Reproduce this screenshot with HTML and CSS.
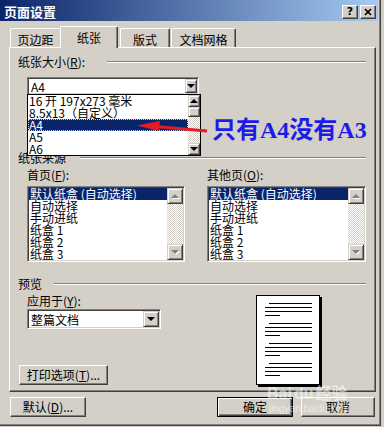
FILE: index.html
```html
<!DOCTYPE html>
<html>

<head>
    <meta charset="utf-8">
    <meta name="viewport" content="width=device-width,initial-scale=1.0">
    <title>页面设置</title>
    <link rel="stylesheet" href="styles.css">
</head>

<body>

    <div class="window">
        <div class="titlebar">
            <span class="title">页面设置</span>
            <div class="caps">
                <span class="cap">?</span>
                <span class="cap">
                    <svg width="8" height="8" viewBox="0 0 8 8"><path d="M1 1L7 7M7 1L1 7" stroke="#000" stroke-width="1.7"/></svg>
                </span>
            </div>
        </div>

        <div class="tabs">
            <div class="tab t1">页边距</div>
            <div class="tab t2 active">纸张</div>
            <div class="tab t3">版式</div>
            <div class="tab t4">文档网格</div>
        </div>

        <div class="panel">
            <div class="group-head">
                <span class="label size-label">纸张大小(<u>R</u>):</span>
                <i class="rule"></i>
            </div>

            <div class="combo size-combo">
                <span class="value">A4</span>
                <span class="drop"><i class="tri down"></i></span>

                <div class="dropdown">
                    <div class="rows">
                        <div class="row">16 开 197x273 毫米</div>
                        <div class="row">8.5x13（自定义）</div>
                        <div class="row sel focus">A4</div>
                        <div class="row">A5</div>
                        <div class="row">A6</div>
                    </div>
                    <div class="vscroll small">
                        <span class="sbtn"><i class="tri up"></i></span>
                        <span class="thumb"></span>
                        <span class="track"></span>
                        <span class="sbtn"><i class="tri down"></i></span>
                    </div>
                </div>
            </div>

            <div class="group-head source-head">
                <span class="label source-label">纸张来源</span>
                <i class="rule"></i>
            </div>

            <div class="trays">
                <div class="tray">
                    <div class="label">首页(<u>F</u>):</div>
                    <div class="listbox">
                        <div class="rows">
                            <div class="row sel">默认纸盒 (自动选择)</div>
                            <div class="row">自动选择</div>
                            <div class="row">手动进纸</div>
                            <div class="row">纸盒 1</div>
                            <div class="row">纸盒 2</div>
                            <div class="row">纸盒 3</div>
                        </div>
                        <div class="vscroll">
                            <span class="sbtn"><i class="tri up off"></i></span>
                            <span class="track"></span>
                            <span class="sbtn"><i class="tri down off"></i></span>
                        </div>
                    </div>
                </div>
                <div class="tray">
                    <div class="label">其他页(<u>O</u>):</div>
                    <div class="listbox">
                        <div class="rows">
                            <div class="row sel">默认纸盒 (自动选择)</div>
                            <div class="row">自动选择</div>
                            <div class="row">手动进纸</div>
                            <div class="row">纸盒 1</div>
                            <div class="row">纸盒 2</div>
                            <div class="row">纸盒 3</div>
                        </div>
                        <div class="vscroll">
                            <span class="sbtn"><i class="tri up off"></i></span>
                            <span class="track"></span>
                            <span class="sbtn"><i class="tri down off"></i></span>
                        </div>
                    </div>
                </div>
            </div>

            <div class="group-head preview-head">
                <span class="label preview-label">预览</span>
                <i class="rule"></i>
            </div>

            <div class="preview">
                <div class="apply">
                    <div class="label apply-label">应用于(<u>Y</u>):</div>
                    <div class="combo apply-combo">
                        <span class="value">整篇文档</span>
                        <span class="drop"><i class="tri down"></i></span>
                    </div>
                    <div class="btn print-btn">打印选项(<u>T</u>)...</div>
                </div>
                <svg class="page" width="66" height="92" viewBox="0 0 66 92">
                    <rect x="2" y="2" width="64" height="90" fill="#000"/>
                    <rect x="0.5" y="0.5" width="63" height="89" fill="#fff" stroke="#000"/>
                    <g stroke="#000">
                        <path d="M13 8.5H56M9 12.5H56M9 16.5H56M9 20.5H24"/>
                        <path d="M13 28.5H56M9 32.5H56M9 36.5H56M9 40.5H24"/>
                        <path d="M13 48.5H56M9 52.5H56M9 56.5H56M9 60.5H24"/>
                        <path d="M13 68.5H56M9 72.5H56M9 76.5H56M9 80.5H24"/>
                    </g>
                </svg>
            </div>
        </div>

        <div class="footer">
            <div class="btn default-btn">默认(<u>D</u>)...</div>
            <div class="btn ok-btn">确定</div>
            <div class="btn cancel-btn">取消</div>
        </div>

        <!-- 标注 -->
        <svg class="arrow" width="72" height="14" viewBox="0 0 72 14">
            <path d="M70 11L18 6.5" stroke="#e41c24" stroke-width="3"/>
            <path d="M0 5.5L23 1L21.5 11Z" fill="#e41c24"/>
        </svg>
        <div class="note">只有A4没有A3</div>

        <div class="watermark">
            <span class="wm-logo">Bai<b>du</b>经验</span>
            <span class="wm-url">jingyan.baidu.com</span>
        </div>
    </div>

</body>

</html>
```

FILE: styles.css
```css
* {
    box-sizing: border-box;
}

body {
    margin: 0;
    background-color: #d4d0c8;
    font-family: "Noto Sans CJK SC", sans-serif;
    font-size: 12px;
    line-height: 12px;
    color: #000;
}

u {
    text-decoration: underline;
}

.window {
    position: relative;
    width: 381px;
    height: 426px;
    box-shadow: inset -1px -1px 0 #404040, inset -2px -2px 0 #808080;
}

/* title bar */

.titlebar {
    height: 21px;
    margin-right: 3px;
    padding: 5px 2px 0 4px;
    display: flex;
    justify-content: space-between;
    align-items: flex-start;
    background: linear-gradient(to right, #0a246a, #a6caf0);
}

.title {
    color: #fff;
    font-weight: bold;
    font-size: 13px;
    line-height: 13px;
}

.caps {
    display: flex;
    gap: 2px;
}

.cap {
    width: 16px;
    height: 14px;
    display: flex;
    align-items: center;
    justify-content: center;
    font-family: "DejaVu Sans", sans-serif;
    font-weight: bold;
    font-size: 11px;
    background-color: #d4d0c8;
    border: 1px solid;
    border-color: #fff #404040 #404040 #fff;
    box-shadow: inset -1px -1px 0 #808080;
}

/* tabs */

.tabs {
    position: relative;
    z-index: 1;
    height: 21px;
    margin-top: 5px;
    padding-left: 10px;
    display: flex;
    align-items: flex-end;
}

.tab {
    height: 19px;
    padding-top: 5px;
    text-align: center;
    background-color: #d4d0c8;
    border: 1px solid;
    border-bottom: none;
    border-color: #fff #404040 #404040 #fff;
    border-radius: 2px 2px 0 0;
    box-shadow: inset -1px 0 0 #808080;
}

.t1 {
    width: 50px;
    border-right: none;
    box-shadow: none;
}

.t2 {
    width: 58px;
}

.t3 {
    width: 50px;
    margin-left: 2px;
}

.t4 {
    width: 65px;
    margin-left: 1px;
}

.tab.active {
    height: 22px;
    margin-bottom: -1px;
}

/* panel */

.panel {
    position: relative;
    width: 367px;
    height: 345px;
    margin-left: 9px;
    padding: 8px 0 0 8px;
    border: 1px solid;
    border-color: #fff #404040 #404040 #fff;
    box-shadow: inset -1px -1px 0 #808080;
}

.group-head {
    display: flex;
    align-items: flex-start;
    height: 12px;
}

.rule {
    flex: 1;
    height: 2px;
    margin: 5px 9px 0 0;
    border-top: 1px solid #808080;
    border-bottom: 1px solid #fff;
}

.size-label {
    width: 89px;
}

.source-head {
    margin-top: 57px;
}

.source-label {
    width: 62px;
}

.preview-head {
    margin-top: 16px;
}

.preview-label {
    width: 36px;
}

/* fields */

.combo {
    position: relative;
    display: flex;
    align-items: stretch;
    background-color: #fff;
    border: 1px solid;
    border-color: #808080 #fff #fff #808080;
    box-shadow: inset 1px 1px 0 #404040, inset -1px -1px 0 #d4d0c8;
    padding: 1px;
}

.combo .value {
    flex: 1;
    padding: 2px 0 0 2px;
}

.drop,
.sbtn {
    display: flex;
    align-items: center;
    justify-content: center;
    background-color: #d4d0c8;
    border: 1px solid;
    border-color: #d4d0c8 #404040 #404040 #d4d0c8;
    box-shadow: inset 1px 1px 0 #fff, inset -1px -1px 0 #808080;
}

.drop {
    width: 12px;
}

.tri {
    width: 0;
    height: 0;
    border-left: 4px solid transparent;
    border-right: 4px solid transparent;
}

.tri.down {
    border-top: 4px solid #000;
}

.tri.up {
    border-bottom: 4px solid #000;
}

.tri.down.off {
    border-top-color: #808080;
    filter: drop-shadow(1px 1px 0 #fff);
}

.tri.up.off {
    border-bottom-color: #808080;
    filter: drop-shadow(1px 1px 0 #fff);
}

.size-combo {
    width: 172px;
    height: 18px;
    margin: 9px 0 0 9px;
}

.dropdown {
    position: absolute;
    z-index: 2;
    top: 100%;
    left: -1px;
    width: 174px;
    height: 62px;
    display: flex;
    background-color: #fff;
    border: 1px solid #000;
}

.rows {
    flex: 1;
    white-space: nowrap;
    overflow: hidden;
}

.row {
    height: 12px;
    padding-left: 1px;
}

.row.sel {
    background-color: #0a246a;
    color: #fff;
}

.row.focus {
    outline: 1px dotted #d4d0c8;
    outline-offset: -1px;
}

.vscroll {
    width: 16px;
    display: flex;
    flex-direction: column;
}

.vscroll.small {
    width: 12px;
}

.vscroll .sbtn {
    height: 16px;
}

.vscroll.small .sbtn {
    height: 12px;
}

.thumb {
    height: 10px;
    background-color: #d4d0c8;
    border: 1px solid;
    border-color: #d4d0c8 #404040 #404040 #d4d0c8;
    box-shadow: inset 1px 1px 0 #fff, inset -1px -1px 0 #808080;
}

.track {
    flex: 1;
    background: repeating-conic-gradient(#d4d0c8 0 25%, #fff 0 50%) 0 0 / 2px 2px;
}

/* paper source */

.trays {
    display: flex;
    gap: 22px;
    margin: 5px 0 0 9px;
}

.tray .label {
    margin-bottom: 5px;
}

.listbox {
    width: 158px;
    height: 76px;
    display: flex;
    background-color: #fff;
    border: 1px solid;
    border-color: #808080 #fff #fff #808080;
    box-shadow: inset 1px 1px 0 #404040, inset -1px -1px 0 #d4d0c8;
    padding: 1px;
}

.tray + .tray .listbox {
    width: 159px;
}

/* preview */

.preview {
    display: flex;
    margin-top: 5px;
}

.apply {
    width: 238px;
    display: flex;
    flex-direction: column;
    align-items: flex-start;
}

.apply-label {
    margin-left: 9px;
}

.apply-combo {
    width: 134px;
    height: 20px;
    margin: 2px 0 0 9px;
}

.apply-combo .value {
    padding-top: 3px;
}

.apply-combo .drop {
    width: 16px;
}

.page {
    display: block;
}

/* buttons */

.btn {
    height: 20px;
    padding-top: 3px;
    text-align: center;
    background-color: #d4d0c8;
    border: 1px solid;
    border-color: #fff #404040 #404040 #fff;
    box-shadow: inset -1px -1px 0 #808080;
}

.print-btn {
    width: 89px;
    margin: 36px 0 0 1px;
}

.footer {
    display: flex;
    margin-top: 5px;
    padding: 0 6px 0 10px;
}

.default-btn {
    width: 76px;
    margin-right: auto;
}

.ok-btn {
    width: 76px;
    border-color: #000;
    box-shadow: inset 1px 1px 0 #fff, inset -1px -1px 0 #404040, inset -2px -2px 0 #808080;
}

.cancel-btn {
    width: 74px;
    margin-left: 8px;
}

/* annotation */

.arrow {
    position: absolute;
    z-index: 5;
    left: 137px;
    top: 120px;
}

.note {
    position: absolute;
    z-index: 5;
    left: 212px;
    top: 118px;
    font-size: 24px;
    line-height: 24px;
    font-weight: bold;
    color: #1c1ce6;
    font-family: "Liberation Serif", "Noto Sans CJK SC", serif;
}

.watermark {
    position: absolute;
    z-index: 5;
    left: 267px;
    top: 385px;
    display: flex;
    flex-direction: column;
    color: rgba(255, 255, 255, 0.55);
    pointer-events: none;
}

.wm-logo {
    font-family: "Liberation Sans", "Noto Sans CJK SC", sans-serif;
    font-weight: bold;
    font-size: 16px;
    line-height: 18px;
}

.wm-logo b {
    margin: 0 2px;
}

.wm-url {
    font-family: "Liberation Sans", sans-serif;
    font-size: 10px;
    line-height: 12px;
    margin-left: 2px;
}
```
